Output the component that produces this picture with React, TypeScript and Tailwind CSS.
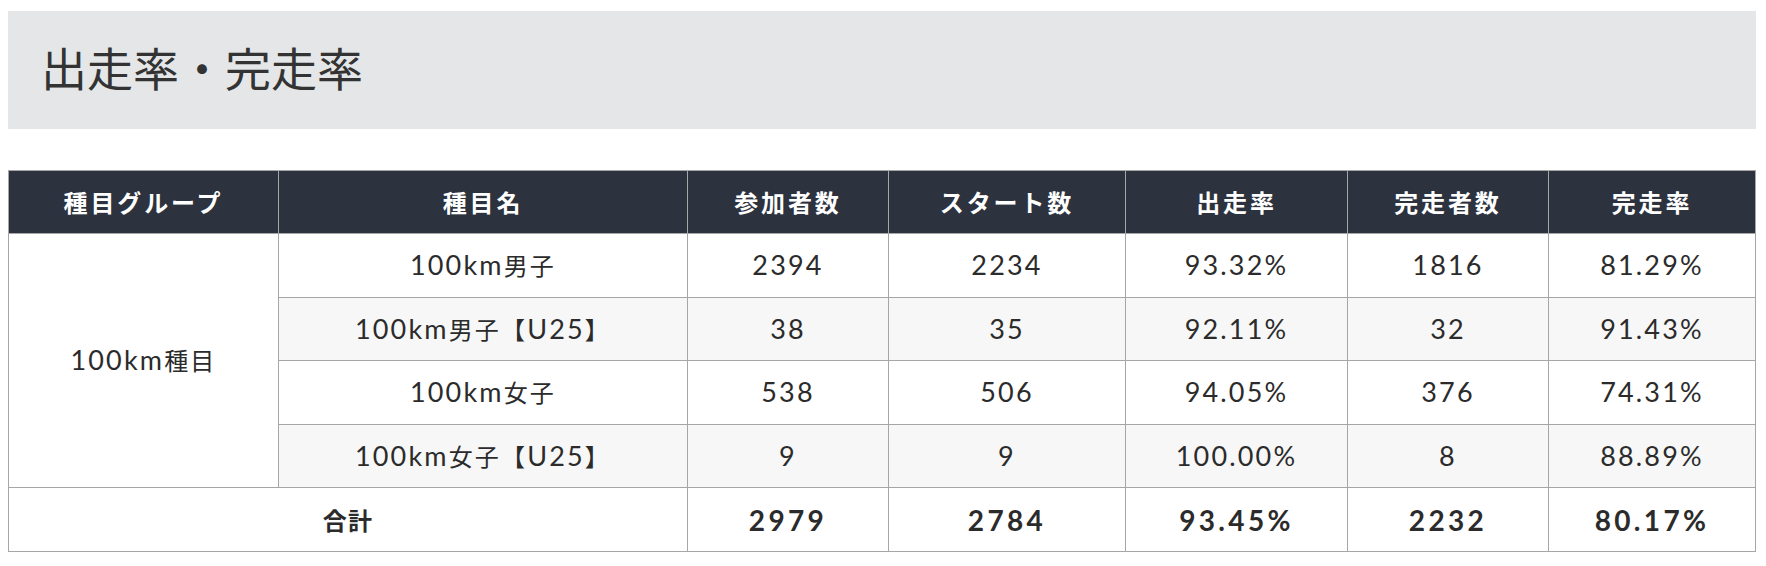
import React from "react";

type RowTypes = {
  name: string;
  cjk: string;
  suffix?: string;
  entries: string;
  starts: string;
  startRate: string;
  finishers: string;
  finishRate: string;
};

const HEADERS = ["種目グループ", "種目名", "参加者数", "スタート数", "出走率", "完走者数", "完走率"];

const ROWS: RowTypes[] = [
  { name: "100km", cjk: "男子", entries: "2394", starts: "2234", startRate: "93.32%", finishers: "1816", finishRate: "81.29%" },
  { name: "100km", cjk: "男子", suffix: "U25", entries: "38", starts: "35", startRate: "92.11%", finishers: "32", finishRate: "91.43%" },
  { name: "100km", cjk: "女子", entries: "538", starts: "506", startRate: "94.05%", finishers: "376", finishRate: "74.31%" },
  { name: "100km", cjk: "女子", suffix: "U25", entries: "9", starts: "9", startRate: "100.00%", finishers: "8", finishRate: "88.89%" },
];

const COL_WIDTHS = ["w-[270px]", "w-[409px]", "w-[201px]", "w-[237px]", "w-[222px]", "w-[201px]", "w-[207px]"];

const cell = "border border-[#a6a6a6] text-center align-middle";
const jp = "text-[24px] font-['Noto_Sans_CJK_JP',sans-serif]";

const App = () => {
  return (
    <div className="bg-white min-h-[566px] pt-[11px] pl-2 font-['Lato','Noto_Sans_CJK_JP',sans-serif] text-[#2b2b2b]">
      <div className="w-[1748px]">
        {/* Section title */}
        <div className="h-[118px] bg-[#e4e6e8] flex items-center pl-[33px] pb-[8px]">
          <h2 className="text-[46px] font-['Noto_Sans_CJK_JP',sans-serif] text-[#333] leading-none">
            出走率・完走率
          </h2>
        </div>

        <table className="mt-[41px] w-[1747px] border-collapse table-fixed">
          <colgroup>
            {COL_WIDTHS.map((w, i) => (
              <col key={i} className={w} />
            ))}
          </colgroup>
          <thead>
            <tr className="h-[63px] bg-[#2c323e]">
              {HEADERS.map((h) => (
                <th
                  key={h}
                  className={`${cell} text-white text-[24px] font-bold tracking-[0.12em] font-['Noto_Sans_CJK_JP',sans-serif]`}
                >
                  {h}
                </th>
              ))}
            </tr>
          </thead>
          <tbody className="text-[27px] tracking-[0.08em]">
            {ROWS.map((row, i) => (
              <tr key={i} className={i % 2 === 1 ? "h-[63.5px] bg-[#f7f7f7]" : "h-[63.5px] bg-white"}>
                {i === 0 && (
                  <td rowSpan={4} className={`${cell} bg-white`}>
                    100km<span className={jp}>種目</span>
                  </td>
                )}
                <td className={cell}>
                  {row.name}
                  <span className={jp}>{row.cjk}</span>
                  {row.suffix && (
                    <>
                      <span className={jp}>【</span>
                      {row.suffix}
                      <span className={jp}>】</span>
                    </>
                  )}
                </td>
                <td className={cell}>{row.entries}</td>
                <td className={cell}>{row.starts}</td>
                <td className={cell}>{row.startRate}</td>
                <td className={cell}>{row.finishers}</td>
                <td className={cell}>{row.finishRate}</td>
              </tr>
            ))}
            {/* totals */}
            <tr className="h-[64px] bg-white font-bold text-[28px] tracking-[0.12em]">
              <td colSpan={2} className={`${cell} ${jp} tracking-[0.05em]`}>
                合計
              </td>
              <td className={cell}>2979</td>
              <td className={cell}>2784</td>
              <td className={cell}>93.45%</td>
              <td className={cell}>2232</td>
              <td className={cell}>80.17%</td>
            </tr>
          </tbody>
        </table>
      </div>
    </div>
  );
};

export default App;
